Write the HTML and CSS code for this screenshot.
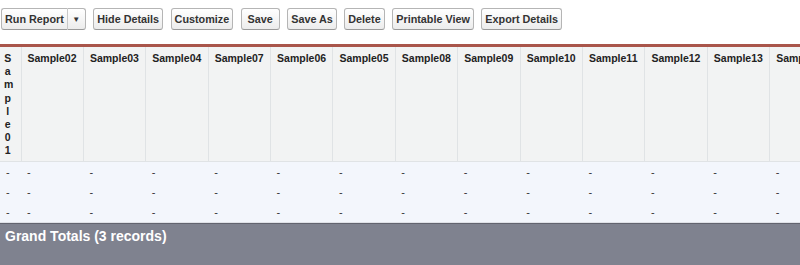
FILE: index.html
```html
<!DOCTYPE html>
<html lang="en">
<head>
    <meta charset="UTF-8">
    <title>Report</title>
    <link rel="stylesheet" href="styles.css">
</head>
<body>
    <div class="toolbar">
        <div class="btn-menu">
            <button class="btn btn-main">Run Report</button>
            <button class="btn btn-arrow">&#9660;</button>
        </div>
        <button class="btn">Hide Details</button>
        <button class="btn">Customize</button>
        <button class="btn">Save</button>
        <button class="btn">Save As</button>
        <button class="btn">Delete</button>
        <button class="btn">Printable View</button>
        <button class="btn">Export Details</button>
    </div>

    <div class="report">
        <table class="report-table">
            <colgroup>
                <col class="col-narrow">
                <col class="col"><col class="col"><col class="col"><col class="col">
                <col class="col"><col class="col"><col class="col"><col class="col">
                <col class="col"><col class="col"><col class="col"><col class="col">
                <col class="col">
            </colgroup>
            <thead>
                <tr>
                    <th class="th-narrow">Sample01</th>
                    <th>Sample02</th>
                    <th>Sample03</th>
                    <th>Sample04</th>
                    <th>Sample07</th>
                    <th>Sample06</th>
                    <th>Sample05</th>
                    <th>Sample08</th>
                    <th>Sample09</th>
                    <th>Sample10</th>
                    <th>Sample11</th>
                    <th>Sample12</th>
                    <th>Sample13</th>
                    <th>Sample14</th>
                </tr>
            </thead>
            <tbody>
                <tr><td>-</td><td>-</td><td>-</td><td>-</td><td>-</td><td>-</td><td>-</td><td>-</td><td>-</td><td>-</td><td>-</td><td>-</td><td>-</td><td>-</td></tr>
                <tr><td>-</td><td>-</td><td>-</td><td>-</td><td>-</td><td>-</td><td>-</td><td>-</td><td>-</td><td>-</td><td>-</td><td>-</td><td>-</td><td>-</td></tr>
                <tr><td>-</td><td>-</td><td>-</td><td>-</td><td>-</td><td>-</td><td>-</td><td>-</td><td>-</td><td>-</td><td>-</td><td>-</td><td>-</td><td>-</td></tr>
            </tbody>
        </table>
        <div class="grand-total">Grand Totals (3 records)</div>
    </div>
</body>
</html>
```

FILE: styles.css
```css
body {
    margin: 0;
    font-family: 'Liberation Sans', Arial, sans-serif;
    color: #333;
    background-color: #fff;
    overflow: hidden;
}
.toolbar {
    display: flex;
    gap: 7.5px;
    margin: 8px 0 0 1px;
}
.btn {
    min-width: 39px;
    height: 22px;
    padding: 0 3px;
    border: 1px solid #b5b5b5;
    border-bottom-color: #9a9a9a;
    border-radius: 3px;
    background: linear-gradient(#ffffff, #ececec);
    color: #333;
    font-family: 'Liberation Sans', Arial, sans-serif;
    font-size: 10.8px;
    font-weight: bold;
    cursor: pointer;
}
.btn-menu {
    display: flex;
}
.btn-main {
    border-radius: 3px 0 0 3px;
    border-right-color: #c8c8c8;
}
.btn-arrow {
    min-width: 0;
    width: 18px;
    padding: 0;
    border-left: none;
    border-radius: 0 3px 3px 0;
    font-size: 8px;
}
.report {
    margin-top: 14px;
}
.report-table {
    width: 832px;
    table-layout: fixed;
    border-collapse: collapse;
    border-top: 3px solid #a9554a;
}
.col-narrow {
    width: 21px;
}
.col {
    width: 62.4px;
}
.report-table th {
    padding: 5px 2px 3px 6px;
    background-color: #f2f3f3;
    border-right: 1px solid #e0e3e5;
    border-bottom: 1px solid #e0e3e5;
    color: #222;
    font-size: 10.5px;
    font-weight: bold;
    line-height: 13.2px;
    text-align: left;
    vertical-align: top;
    white-space: nowrap;
}
.report-table th.th-narrow {
    padding: 5px 9px 3px 4px;
    text-align: center;
    white-space: normal;
    word-break: break-all;
}
.report-table td {
    height: 20px;
    padding: 0 6px;
    background-color: #f3f6fc;
    font-size: 11px;
    vertical-align: middle;
}
.grand-total {
    height: 32px;
    padding: 5px 5px;
    border-top: 1px solid #dfe1e7;
    box-shadow: inset 0 1px 0 #62646f;
    background-color: #7f828f;
    color: #fff;
    font-size: 14px;
    font-weight: bold;
}
```
